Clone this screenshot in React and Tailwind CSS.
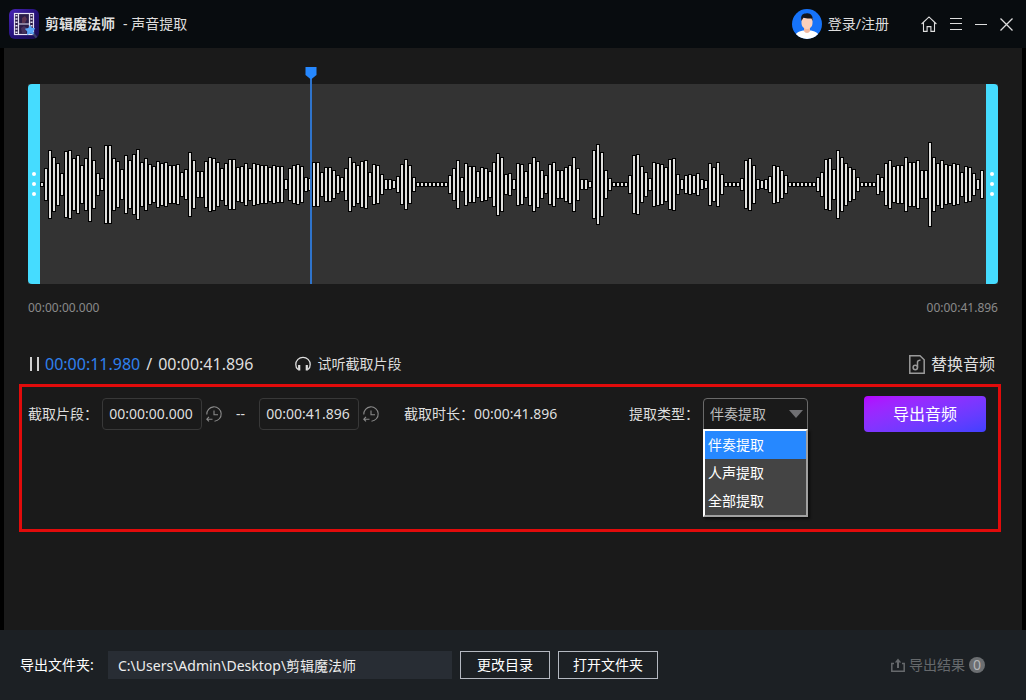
import { useState } from 'react'

// half height of every bar in the waveform, left to right
const LEVELS = [
  2, 16, 34, 27, 21, 11, 33, 34, 26, 29, 19, 26, 37, 24, 11, 6, 39, 39, 26, 23,
  15, 29, 24, 30, 35, 22, 26, 20, 18, 23, 21, 22, 19, 19, 20, 12, 15, 32, 24, 13,
  13, 23, 27, 26, 22, 16, 21, 25, 25, 17, 18, 21, 16, 21, 20, 19, 19, 17, 19, 18,
  18, 5, 16, 19, 20, 18, 7, 6, 22, 22, 12, 17, 17, 14, 9, 7, 16, 27, 22, 19,
  23, 24, 12, 20, 19, 10, 5, 5, 4, 8, 20, 25, 19, 7, 2, 2, 2, 2, 2, 2,
  2, 2, 9, 16, 24, 7, 21, 18, 18, 13, 17, 16, 13, 22, 31, 27, 10, 11, 5, 21,
  20, 13, 21, 27, 23, 14, 9, 20, 22, 14, 14, 17, 19, 27, 16, 5, 5, 3, 34, 40,
  32, 14, 6, 2, 2, 2, 2, 9, 29, 30, 18, 12, 6, 22, 21, 20, 17, 25, 26, 10,
  5, 9, 10, 9, 11, 5, 4, 21, 17, 22, 10, 2, 2, 2, 2, 6, 24, 26, 19, 5,
  4, 5, 8, 19, 18, 14, 9, 2, 2, 2, 2, 2, 2, 2, 7, 12, 25, 26, 15, 34,
  27, 21, 17, 15, 7, 2, 2, 2, 2, 10, 7, 21, 24, 18, 19, 19, 27, 22, 22, 24,
  14, 14, 42, 27, 21, 24, 20, 19, 21, 20, 12, 18, 17, 11, 5, 14,
]

const TYPES = ['伴奏提取', '人声提取', '全部提取']

const POSITION = 11.98
const DURATION = 41.896

function Logo() {
  return (
    <svg className="h-[30px] w-[30px]" viewBox="0 0 30 30" aria-hidden="true">
      <defs>
        <linearGradient id="logo-bg" x1="0" y1="0" x2="1" y2="1">
          <stop offset="0" stopColor="#4a24b8" />
          <stop offset="0.5" stopColor="#25127a" />
          <stop offset="1" stopColor="#190d4c" />
        </linearGradient>
      </defs>
      <rect width="30" height="30" rx="6" fill="url(#logo-bg)" />
      <rect x="5.5" y="4.5" width="19" height="21" fill="#2a1c48" stroke="#e6e2f4" strokeWidth="1.2" />
      <path d="M9.5 4.5v21M20.5 4.5v21M9.5 15h11" stroke="#e6e2f4" strokeWidth="1.2" />
      <path d="M7.5 6v18M22.5 6v18" stroke="#e6e2f4" strokeWidth="2" strokeDasharray="1.5 1.8" />
      <path d="M13 9l3-2 2 3-2 4h-3z" fill="#5c3350" />
      <path d="M12 19l3-2 3 2-1 5h-4z" fill="#46305c" />
      <path d="M23 23l4.500 5.500" stroke="#3a3f66" strokeWidth="2" />
      <path d="M21 16l1.800 2.800 3.400.4-2 3 .8 3.300-3.500-1-3.500 1.500.2-3.500-2.400-2.800 3.600-.6z" fill="#5aa8fa" />
    </svg>
  )
}

function Avatar() {
  return (
    <svg className="h-[30px] w-[30px]" viewBox="0 0 30 30" aria-hidden="true">
      <clipPath id="avatar-clip">
        <circle cx="15" cy="15" r="15" />
      </clipPath>
      <g clipPath="url(#avatar-clip)">
        <rect width="30" height="30" fill="#1673f9" />
        <path d="M2 30c0-5 4-7.500 9-8.500h8c5 1 9 3.500 9 8.500z" fill="#fff" />
        <path d="M12 17h6v5c-1 2.500-5 2.500-6 0z" fill="#f3b9a0" />
        <path d="M9.500 9h11v5c0 3.500-2.500 6-5.500 6s-5.500-2.500-5.500-6z" fill="#fbd0bb" />
        <path d="M9.500 12C8.300 7 10 4.500 14 4.500c4.500-1 7.500 2.500 6.500 7.500l-1-2.500c-3 .3-6 0-8-1z" fill="#14151c" />
      </g>
    </svg>
  )
}

function HistoryIcon() {
  return (
    <svg className="h-4 w-4" viewBox="0 0 16 16" fill="none" stroke="#8a8a8a" strokeWidth="1.1" aria-hidden="true">
      <path d="M.8 8.500A7.200 7.200 0 1 1 8.500 15.200" />
      <path d="M8 4.500v4.200h4" />
      <path d="M6.500 13.200H.8M3 10.800L.8 13.200l2.200 2.200" />
    </svg>
  )
}

function TimeField({ label, value, onChange }) {
  return (
    <div className="flex items-center gap-1">
      <input
        aria-label={label}
        value={value}
        onChange={(e) => onChange(e.target.value)}
        className="h-8 w-[100px] rounded border border-[#383838] bg-transparent pr-0.5 pb-0.5 text-center text-sm text-[#dedede] outline-none"
      />
      <button type="button" aria-label={`重置${label}`}>
        <HistoryIcon />
      </button>
    </div>
  )
}

function Handle({ className }) {
  return (
    <div className={`flex w-3 shrink-0 flex-col items-center justify-center gap-1.5 bg-[#45dcff] ${className}`}>
      <span className="h-1 w-1 rounded-full bg-white" />
      <span className="h-1 w-1 rounded-full bg-white" />
      <span className="h-1 w-1 rounded-full bg-white" />
    </div>
  )
}

function Waveform() {
  return (
    <div className="flex h-[200px] bg-[#333333]">
      <Handle className="rounded-l" />
      <div className="relative min-w-0 flex-1">
        <svg className="h-full w-full" viewBox="0 0 946 200" preserveAspectRatio="none" shapeRendering="crispEdges">
          {LEVELS.map((h, i) => (
            <g key={i}>
              <rect x={i * 4} y={100 - h} width="4" height={h * 2 + 1} fill="#000" />
              <rect x={i * 4 + 1} y={101 - h} width="2" height={h * 2 - 1} fill="#dfdfdd" />
            </g>
          ))}
        </svg>
        {/* playhead */}
        <svg
          className="absolute -top-[17px] h-[217px] w-3 -translate-x-1/2"
          style={{ left: `${(POSITION / DURATION) * 100}%` }}
          viewBox="0 0 12 217"
          aria-hidden="true"
        >
          <path d="M5 10h2v207H5z" fill="#2f74cc" />
          <path d="M.5 0h11v8L6 12.500.5 8z" fill="#2688ff" />
        </svg>
      </div>
      <Handle className="rounded-r" />
    </div>
  )
}

function Header() {
  return (
    <header className="flex h-12 items-center bg-[#080c0f] pr-[13px] pl-[9px] text-sm text-[#dedede]">
      <Logo />
      <h1 className="ml-1.5 flex gap-2">
        <span className="font-bold">剪辑魔法师</span>
        <span>- 声音提取</span>
      </h1>
      <a href="#login" className="ml-auto flex items-center gap-1.5">
        <Avatar />
        登录/注册
      </a>
      <nav className="ml-8 flex items-center gap-[13px] text-[#dedede]">
        <button type="button" aria-label="首页">
          <svg className="h-4 w-4" viewBox="0 0 16 16" fill="none" stroke="currentColor" strokeWidth="1.1">
            <path d="M.6 8L8 .9 15.400 8M2.500 6.500v8.900h3.600v-4.800h3.800v4.800h3.600V6.500" />
          </svg>
        </button>
        <button type="button" aria-label="菜单">
          <svg className="h-3 w-3" viewBox="0 0 12 12" stroke="currentColor">
            <path d="M0 .5h12M0 5.500h12M0 11.500h12" />
          </svg>
        </button>
        <button type="button" aria-label="最小化">
          <svg className="h-3 w-3" viewBox="0 0 12 12" stroke="currentColor">
            <path d="M0 6.500h12" />
          </svg>
        </button>
        <button type="button" aria-label="关闭">
          <svg className="h-[13px] w-[13px]" viewBox="0 0 13 13" stroke="currentColor" strokeWidth="1.300">
            <path d="M.5.5l12 12M12.500.5l-12 12" />
          </svg>
        </button>
      </nav>
    </header>
  )
}

function TypeSelect() {
  const [type, setType] = useState(TYPES[0])

  return (
    <div className="flex items-center">
      <label htmlFor="type" className="w-[74px]">提取类型：</label>
      <div className="relative">
        <select
          id="type"
          value={type}
          onChange={(e) => setType(e.target.value)}
          className="block h-8 w-[105px] appearance-none rounded-t-sm border border-[#6a6a6a] bg-[#1a1a1a] pl-1.5 text-sm text-[#bdbdbd] outline-none"
        >
          {TYPES.map((t) => (
            <option key={t}>{t}</option>
          ))}
        </select>
        <svg className="pointer-events-none absolute top-3 right-[5px] h-2 w-[14px]" viewBox="0 0 14 8" aria-hidden="true">
          <path d="M0 0h14L7 8z" fill="#707073" />
        </svg>
        <ul className="absolute top-[31px] left-0 w-[105px] border-2 border-t-white border-r-[#a0a0a0] border-b-[#a0a0a0] border-l-white bg-[#444444] text-white shadow-[2px_2px_2px_#0c0c0c]">
          {TYPES.map((t) => (
            <li key={t}>
              <button
                type="button"
                onClick={() => setType(t)}
                className={`block h-7 w-full pl-[3px] text-left ${t === type ? 'bg-[#2688ff]' : ''}`}
              >
                {t}
              </button>
            </li>
          ))}
        </ul>
      </div>
    </div>
  )
}

function Footer() {
  return (
    <footer className="flex h-[70px] items-center bg-[#1c2024] px-5 text-sm text-white">
      <label htmlFor="folder" className="w-[88px]">导出文件夹:</label>
      <input
        id="folder"
        readOnly
        value={'C:\\Users\\Admin\\Desktop\\剪辑魔法师'}
        className="h-7 w-[344px] bg-[#282d34] px-2.5 text-sm text-[#eeeeee] outline-none"
      />
      <button type="button" className="ml-2 h-7 w-[90px] border border-[#b4b8c0]">更改目录</button>
      <button type="button" className="ml-2 h-7 w-[100px] border border-[#b4b8c0]">打开文件夹</button>
      <button type="button" className="mr-[21px] ml-auto flex items-center gap-1 text-[#66696c]">
        <svg className="h-[14px] w-[14px]" viewBox="0 0 14 14" fill="none" stroke="currentColor" strokeWidth="1.500" aria-hidden="true">
          <path d="M3 5.500H.8v7.700h12.400V5.500H11" />
          <path d="M7 10V3" strokeWidth="2" />
          <path d="M3.800 4.500L7 .5l3.200 4z" fill="currentColor" stroke="none" />
        </svg>
        导出结果
        <span className="flex h-4 w-4 items-center justify-center rounded-full bg-[#6b6e71] text-sm text-[#b4b6b8]">0</span>
      </button>
    </footer>
  )
}

export default function App() {
  const [start, setStart] = useState('00:00:00.000')
  const [end, setEnd] = useState('00:00:41.896')

  return (
    <div className="flex min-h-screen flex-col bg-black font-['Noto_Sans','Noto_Sans_CJK_SC',sans-serif]">
      <Header />

      <main className="mx-1 flex-1 bg-[#1a1a1a] pt-9 pr-[21px] pb-8 pl-[15px] text-[#dedede]">
        <div className="mr-[3px] ml-[9px]">
          <Waveform />
          <div className="mt-4 flex justify-between text-xs text-[#8a8a8a]">
            <span>00:00:00.000</span>
            <span>00:00:41.896</span>
          </div>

          <div className="mt-9 flex h-6 items-center">
            <button type="button" aria-label="暂停">
              <svg className="h-4 w-3" viewBox="0 0 12 16" aria-hidden="true">
                <path d="M2 1h2v14H2zM9 1h2v14H9z" fill="#d0d0d0" />
              </svg>
            </button>
            <p className="ml-[5px] flex gap-1.5 text-base">
              <span className="text-[#2f80ed]">00:00:11.980</span>
              <span>/</span>
              <span>00:00:41.896</span>
            </p>
            <button type="button" className="ml-[42px] flex items-center gap-1.5 text-sm">
              <svg className="h-4 w-4" viewBox="0 0 16 16" fill="none" stroke="currentColor" strokeWidth="1.300" aria-hidden="true">
                <path d="M3 13.500C1.500 12.500.8 10.500.8 8.500a7.200 7.200 0 0 1 14.400 0c0 2-.7 4-2.200 5" />
                <path d="M4.200 9v5.500M11.800 9v5.500" strokeWidth="2.200" />
              </svg>
              试听截取片段
            </button>
            <button type="button" className="mr-[3px] ml-auto flex items-center gap-1.5 text-base">
              <svg className="h-[19px] w-4" viewBox="0 0 16 19" fill="none" stroke="#9a9a9a" strokeWidth="1.500" aria-hidden="true">
                <path d="M.8.8h10.200l4.200 4v13.400H.8z" />
                <circle cx="6.300" cy="12.500" r="2.200" />
                <path d="M8.500 12.500V7c0-1 1-1.700 3-2" />
              </svg>
              替换音频
            </button>
          </div>
        </div>

        <section className="mt-2 flex h-[148px] items-start border-3 border-[#e10b0b] py-[9px] pr-3 pl-1.5 text-sm">
          <div className="flex h-9 flex-1 items-center">
            <span className="w-[74px]">截取片段：</span>
            <TimeField label="开始时间" value={start} onChange={setStart} />
            <span className="w-[37px] text-center">--</span>
            <TimeField label="结束时间" value={end} onChange={setEnd} />
            <p className="ml-[25px]">截取时长：00:00:41.896</p>
            <div className="mr-14 ml-auto">
              <TypeSelect />
            </div>
            <button type="button" className="h-9 w-[122px] rounded bg-linear-to-br from-[#b400ff] to-[#4040ff] text-base text-white">
              导出音频
            </button>
          </div>
        </section>
      </main>

      <Footer />
    </div>
  )
}
